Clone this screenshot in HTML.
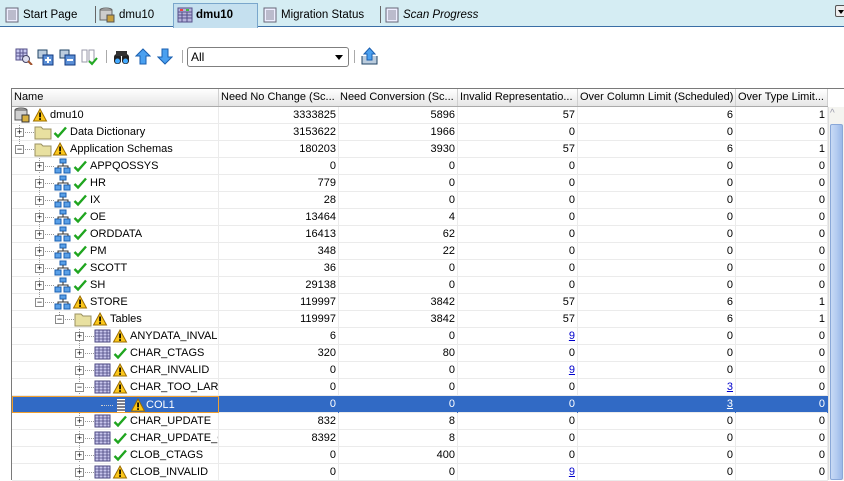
<!DOCTYPE html>
<html><head><meta charset="utf-8"><style>
*{margin:0;padding:0;box-sizing:border-box}
body{width:844px;height:480px;overflow:hidden;background:#fff;font-family:"Liberation Sans",Tahoma,sans-serif;font-size:11px;color:#000;position:relative}
.a{position:absolute}
.tabs{left:0;top:0;width:844px;height:27px;background:#d5edf3;border-bottom:1px solid #3a6ea5}
.tab{top:4px;height:22px;line-height:22px;font-size:11.5px;display:flex;align-items:center;gap:3px}
.sep{top:6px;width:1px;height:17px;background:#666}
.row{left:12px;width:816px;height:17px;border-bottom:1px solid #ebebeb}
.c{position:absolute;top:0;height:17px;line-height:17px;text-align:right;padding-right:2px;border-right:1px solid #ebebeb;white-space:nowrap;overflow:hidden}
.hd .c{border-right:1px solid #d0d0d0;text-align:left;padding-left:2px;background:linear-gradient(#fff,#f0f0f0 60%,#e6e6e6)}
.c1{left:207px;width:120px}.c2{left:326px;width:120px}.c3{left:446px;width:120px}.c4{left:566px;width:158px}.c5{left:724px;width:92px}
.lnk{color:#00c;text-decoration:underline}
.nm{position:absolute;top:0;height:17px;line-height:17px;white-space:nowrap}
.exp{position:absolute;top:4px;width:9px;height:9px;border:1px solid #8a8a8a;background:#fff;font-size:9px;line-height:7px;text-align:center;color:#000}
.dh{position:absolute;top:8px;height:1px;border-top:1px dotted #999}
.dv{position:absolute;width:1px;border-left:1px dotted #999}
svg{display:block}
.ic{position:absolute;top:0}
.sel{background:#316ac5;color:#fff}
.sel .c{border-right-color:#316ac5}
</style></head><body>

<div class="a tabs"></div>
<div class="a tab" style="left:4px"><svg width="16" height="16"><rect x="2" y="1" width="12" height="14" fill="#eef" stroke="#667"/><path d="M4 4h8M4 6h8M4 8h8M4 10h8M4 12h8" stroke="#889"/></svg>Start Page</div>
<div class="a sep" style="left:95px"></div>
<div class="a tab" style="left:98px"><svg width="18" height="16"><ellipse cx="8" cy="3" rx="6" ry="2" fill="#ccc" stroke="#666"/><rect x="2" y="3" width="12" height="10" fill="#ccc" stroke="#666"/><rect x="9" y="8" width="7" height="7" fill="#c8a040" stroke="#555"/></svg>dmu10</div>
<div class="a" style="left:173px;top:3px;width:85px;height:25px;background:#c5e0ef;border:1px solid #7aa7cc;border-bottom:none"></div>
<div class="a tab" style="left:177px;font-weight:bold"><svg width="16" height="16"><rect x="1" y="1" width="14" height="14" fill="#b8b4dc" stroke="#55508a"/><path d="M1 5h14M1 8h14M1 11h14M5 5v10M10 5v10" stroke="#55508a"/><rect x="3" y="2" width="3" height="2" fill="#e44"/><rect x="9" y="2" width="3" height="2" fill="#4b4"/></svg> dmu10</div>
<div class="a tab" style="left:262px"><svg width="16" height="16"><rect x="2" y="1" width="12" height="14" fill="#eef" stroke="#667"/><path d="M4 4h8M4 6h8M4 8h8M4 10h8M4 12h8" stroke="#889"/></svg>Migration Status</div>
<div class="a sep" style="left:380px"></div>
<div class="a tab" style="left:384px;font-style:italic"><svg width="16" height="16"><rect x="2" y="1" width="12" height="14" fill="#eef" stroke="#667"/><path d="M4 4h8M4 6h8M4 8h8M4 10h8M4 12h8" stroke="#889"/></svg>Scan Progress</div>
<div class="a" style="left:835px;top:5px;width:11px;height:12px;border:1px solid #555;border-radius:2px;background:#eee"><div style="margin:4px 0 0 2px;width:0;height:0;border-left:3px solid transparent;border-right:3px solid transparent;border-top:4px solid #000"></div></div>

<!-- toolbar -->
<div class="a" style="left:15px;top:48px"><svg width="18" height="17"><rect x="1" y="1" width="11" height="11" fill="#c8c8f0" stroke="#55508a"/><path d="M1 5h11M1 8h11M5 1v11M8 1v11" stroke="#55508a"/><circle cx="11" cy="11" r="3.5" fill="#dde" stroke="#446"/><path d="M13 13l4 4" stroke="#a0522d" stroke-width="2"/></svg></div>
<div class="a" style="left:37px;top:49px"><svg width="17" height="17"><rect x="1" y="1" width="9" height="8" fill="#bcd" stroke="#246"/><rect x="6" y="6" width="10" height="10" fill="#5b8fd6" stroke="#123a80"/><path d="M11 8v6M8 11h6" stroke="#fff" stroke-width="2"/></svg></div>
<div class="a" style="left:59px;top:49px"><svg width="17" height="17"><rect x="1" y="1" width="9" height="8" fill="#bcd" stroke="#246"/><rect x="6" y="6" width="10" height="10" fill="#5b8fd6" stroke="#123a80"/><path d="M8 11h6" stroke="#fff" stroke-width="2"/></svg></div>
<div class="a" style="left:81px;top:49px"><svg width="17" height="17"><rect x="1" y="1" width="5" height="12" fill="#fff" stroke="#99a"/><rect x="8" y="1" width="5" height="12" fill="#fff" stroke="#99a"/><path d="M8 12l3 3 5-6" stroke="#2a2" stroke-width="2" fill="none"/></svg></div>
<div class="a" style="left:106px;top:50px;width:1px;height:13px;background:#aaa"></div>
<div class="a" style="left:113px;top:49px"><svg width="17" height="16"><rect x="1" y="5" width="7" height="10" rx="3" fill="#222"/><rect x="9" y="5" width="7" height="10" rx="3" fill="#222"/><circle cx="4.5" cy="12" r="2.5" fill="#4af"/><circle cx="12.5" cy="12" r="2.5" fill="#4af"/><rect x="3" y="2" width="11" height="5" fill="#333"/></svg></div>
<div class="a" style="left:135px;top:48px"><svg width="16" height="17"><path d="M8 1L15 8H11V16H5V8H1Z" fill="#4aa0f0" stroke="#1a5fb0"/></svg></div>
<div class="a" style="left:157px;top:48px"><svg width="16" height="17"><path d="M8 16L15 9H11V1H5V9H1Z" fill="#4aa0f0" stroke="#1a5fb0"/></svg></div>
<div class="a" style="left:182px;top:50px;width:1px;height:13px;background:#aaa"></div>
<div class="a" style="left:187px;top:47px;width:162px;height:20px;border:1px solid #7f7f7f;border-radius:3px;padding:2px 3px;font-size:12px">All<div style="position:absolute;right:5px;top:7px;border-left:4px solid transparent;border-right:4px solid transparent;border-top:5px solid #000"></div></div>
<div class="a" style="left:354px;top:50px;width:1px;height:13px;background:#aaa"></div>
<div class="a" style="left:361px;top:47px"><svg width="17" height="18"><path d="M1 9v8h15V9" fill="#bcd" stroke="#246"/><path d="M8.5 1L14 7H11V13H6V7H3Z" fill="#4aa0f0" stroke="#1a5fb0"/></svg></div>

<!-- table frame -->
<div class="a" style="left:11px;top:88px;width:1px;height:392px;background:#7a7a7a"></div>
<div class="a" style="left:11px;top:88px;width:833px;height:1px;background:#7a7a7a"></div>
<div class="a row hd" style="top:89px;height:18px;border-bottom:1px solid #aaa">
<div class="c" style="left:0;width:207px">Name</div>
<div class="c c1">Need No Change (Sc...</div><div class="c c2">Need Conversion (Sc...</div><div class="c c3">Invalid Representatio...</div><div class="c c4">Over Column Limit (Scheduled)</div><div class="c c5">Over Type Limit...</div>
</div>
<!-- scrollbar -->
<div class="a" style="left:828px;top:107px;width:16px;height:373px;background:#f4f4f0;border-left:1px solid #ddd"></div>
<div class="a" style="left:830px;top:108px;font-size:10px;color:#99a">^</div>
<div class="a" style="left:830px;top:124px;width:13px;height:356px;background:linear-gradient(90deg,#c8daf5,#b4ccf0 50%,#9ab8e8);border:1px solid #8aa8d8;border-radius:2px"></div>

<!-- tree lines -->
<div class="a dv" style="left:19px;top:123px;height:27px"></div>
<div class="a dv" style="left:39px;top:157px;height:144px"></div>
<div class="a dv" style="left:59px;top:310px;height:9px"></div>
<div class="a dv" style="left:79px;top:327px;height:153px"></div>
<div class="a dv" style="left:99px;top:395px;height:10px"></div>

<div id="rows"></div>
<script>
var W='<svg width="16" height="16"><path d="M8 2L14.5 14H1.5Z" fill="#fcc71a" stroke="#9a6c00"/><rect x="7.2" y="5.5" width="1.7" height="4.8" fill="#000"/><rect x="7.2" y="11.2" width="1.7" height="1.7" fill="#000"/></svg>';
var K='<svg width="16" height="16"><path d="M2.5 9l3.5 3.5 8-9" stroke="#1fa51f" stroke-width="2.4" fill="none"/></svg>';
var I={
db:'<svg width="18" height="16"><ellipse cx="7" cy="3" rx="6" ry="2" fill="#ccc" stroke="#555"/><rect x="1" y="3" width="12" height="10" fill="#d0d0d0" stroke="#555"/><rect x="8" y="8" width="7" height="7" fill="#d8b040" stroke="#333"/></svg>',
fo:'<svg width="18" height="16"><path d="M1 3h6l2 2h8v10H1Z" fill="#e8e0a0" stroke="#9a9060"/></svg>',
sc:'<svg width="18" height="16"><rect x="6" y="1" width="6" height="4" fill="#5aa0e8" stroke="#1a5fb0"/><rect x="1" y="10" width="6" height="5" fill="#5aa0e8" stroke="#1a5fb0"/><rect x="10" y="10" width="6" height="5" fill="#5aa0e8" stroke="#1a5fb0"/><path d="M9 5v3M4 10V8h10v2" stroke="#333" fill="none"/></svg>',
tb:'<svg width="18" height="16"><rect x="1" y="2" width="15" height="12" fill="#c8c6ec" stroke="#4a4680"/><path d="M1 5h15M1 8h15M1 11h15M5 2v12M9 2v12M13 2v12" stroke="#4a4680" stroke-width=".8"/></svg>',
co:'<svg width="14" height="16"><rect x="3" y="2" width="8" height="13" fill="#fff"/><path d="M3 4h8M3 7h8M3 10h8M3 13h8" stroke="#556" stroke-width="1.5"/></svg>'};
var R=[
[0,'','db','w','dmu10',['3333825','5896','57','6','1']],
[1,'+','fo','k','Data Dictionary',['3153622','1966','0','0','0']],
[1,'-','fo','w','Application Schemas',['180203','3930','57','6','1']],
[2,'+','sc','k','APPQOSSYS',['0','0','0','0','0']],
[2,'+','sc','k','HR',['779','0','0','0','0']],
[2,'+','sc','k','IX',['28','0','0','0','0']],
[2,'+','sc','k','OE',['13464','4','0','0','0']],
[2,'+','sc','k','ORDDATA',['16413','62','0','0','0']],
[2,'+','sc','k','PM',['348','22','0','0','0']],
[2,'+','sc','k','SCOTT',['36','0','0','0','0']],
[2,'+','sc','k','SH',['29138','0','0','0','0']],
[2,'-','sc','w','STORE',['119997','3842','57','6','1']],
[3,'-','fo','w','Tables',['119997','3842','57','6','1']],
[4,'+','tb','w','ANYDATA_INVALID',['6','0','L9','0','0']],
[4,'+','tb','k','CHAR_CTAGS',['320','80','0','0','0']],
[4,'+','tb','w','CHAR_INVALID',['0','0','L9','0','0']],
[4,'-','tb','w','CHAR_TOO_LARGE',['0','0','0','L3','0']],
[5,'','co','w','COL1',['0','0','0','L3','0']],
[4,'+','tb','k','CHAR_UPDATE',['832','8','0','0','0']],
[4,'+','tb','k','CHAR_UPDATE_OLD',['8392','8','0','0','0']],
[4,'+','tb','k','CLOB_CTAGS',['0','400','0','0','0']],
[4,'+','tb','w','CLOB_INVALID',['0','0','L9','0','0']]];
var h='';
R.forEach(function(r,i){
 var top=107+17*i,lv=r[0],sel=lv==5;
 var ix=lv==5?101:(lv==0?2:22+20*(lv-1));
 var s='<div class="a row'+(sel?' sel':'')+'" style="top:'+top+'px">';
 s+='<div class="c" style="left:0;width:207px;text-align:left;'+(sel?'border:1px solid #f0a030;':'')+'">';
 if(r[1]){var ex=3+20*(lv-1);s+='<div class="exp" style="left:'+ex+'px">'+(r[1]=='+'?'+':'&minus;')+'</div><div class="dh" style="left:'+(ex+10)+'px;width:'+(ix-ex-10)+'px"></div>';}
 if(lv==5)s+='<div class="dh" style="left:88px;width:12px;border-top-color:#ccc"></div>';
 s+='<div class="ic" style="left:'+ix+'px">'+I[r[2]]+'</div>';
 var sx=ix+(lv==5?16:18);
 s+='<div class="ic" style="left:'+sx+'px">'+(r[3]=='w'?W:K)+'</div>';
 s+='<div class="nm" style="left:'+(sx+(lv==5?16:18))+'px">'+r[4]+'</div></div>';
 r[5].forEach(function(v,j){
  var t=v[0]=='L'?'<span class="lnk"'+(sel?' style="color:#fff"':'')+'>'+v.slice(1)+'</span>':v;
  s+='<div class="c c'+(j+1)+'">'+t+'</div>';});
 h+=s+'</div>';});
document.getElementById('rows').outerHTML=h;
</script>
</body></html>
